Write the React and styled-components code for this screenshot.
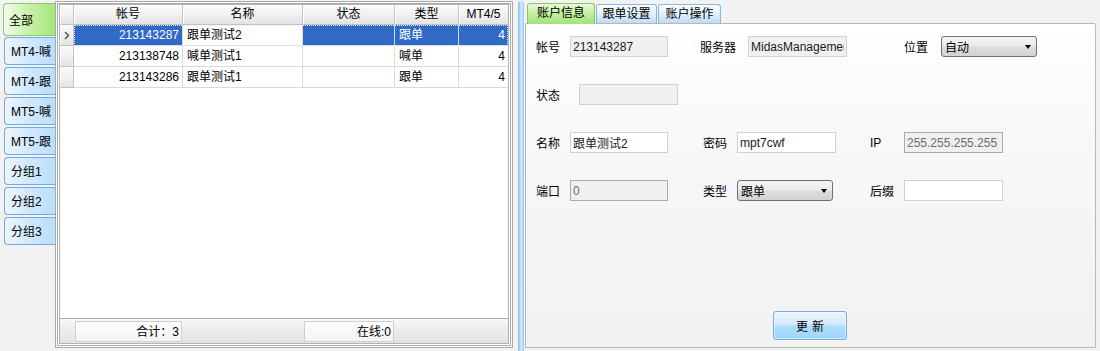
import React from 'react';
import styled, { createGlobalStyle, css } from 'styled-components';

const Global = createGlobalStyle`
  html, body { margin: 0; padding: 0; }
  body {
    background: #f2f2f2;
    font-family: "Liberation Sans", "Noto Sans CJK SC", sans-serif;
    font-size: 12px;
    color: #000;
  }
`;

const Root = styled.div`
  display: flex;
  width: 1100px;
  height: 351px;
  background: #f2f2f2;
  overflow: hidden;
`;

/* ---------- left vertical tabs ---------- */
const SideTabs = styled.div`
  width: 55px;
  flex: none;
  display: flex;
  flex-direction: column;
  align-items: flex-end;
  gap: 2px;
  padding-top: 3px;
  box-sizing: border-box;
`;

const SideTab = styled.div`
  box-sizing: border-box;
  width: ${p => (p.$active ? 52 : 51)}px;
  height: ${p => (p.$active ? 33 : 28)}px;
  margin-bottom: ${p => (p.$active ? -1 : 0)}px;
  border: 1px solid ${p => (p.$active ? '#8cc870' : '#72a9e2')};
  border-right: none;
  border-radius: 4px 0 0 4px;
  background: ${p =>
    p.$active
      ? 'linear-gradient(to right, #f1faea 0%, #cdf1ad 45%, #a3e67a 100%)'
      : 'linear-gradient(to right, #eef5fd 0%, #d2e9fc 45%, #b8defe 100%)'};
  padding-left: ${p => (p.$active ? 5 : 6)}px;
  padding-top: ${p => (p.$active ? 3 : 1)}px;
  display: flex;
  align-items: center;
  white-space: nowrap;
  overflow: hidden;
  line-height: 14px;
`;

/* ---------- grid panel ---------- */
const GridPanel = styled.div`
  width: 458px;
  flex: none;
  box-sizing: border-box;
  margin: 1px 0 3px;
  border: 3px double #a9a9a9;
  padding: 0 1px 1px 1px;
  display: flex;
  flex-direction: column;
  background: #fff;
`;

const Grid = styled.div`
  flex: 1;
  display: flex;
  flex-direction: column;
  border: 1px solid #b3b3b3;
  background: #fff;
  min-height: 0;
`;

const HeaderRow = styled.div`
  display: flex;
  height: 20px;
  flex: none;
`;

const headerSkin = css`
  background: linear-gradient(#fbfbfb 0%, #f1f1f1 50%, #e3e3e3 100%);
  border-right: 1px solid #c2c2c2;
  border-bottom: 1px solid #c2c2c2;
  box-shadow: inset 1px 1px 0 #ffffff;
`;

const HeadCell = styled.div`
  ${headerSkin};
  box-sizing: border-box;
  width: ${p => (p.$w ? `${p.$w}px` : 'auto')};
  flex: ${p => (p.$w ? 'none' : '1')};
  ${p => p.$last && 'border-right: none;'}
  height: 20px;
  line-height: 19px;
  text-align: center;
  white-space: nowrap;
  overflow: hidden;
`;

const Body = styled.div`
  flex: 1;
  display: flex;
  flex-direction: column;
`;

const Row = styled.div`
  display: flex;
  height: 21px;
  flex: none;
`;

const RowHead = styled.div`
  ${headerSkin};
  box-sizing: border-box;
  width: 14px;
  flex: none;
  display: flex;
  align-items: center;
  justify-content: center;
`;

const RowCells = styled.div`
  flex: 1;
  display: flex;
  ${p =>
    p.$focus &&
    css`
      outline: 1px dotted #dfe8f8;
      outline-offset: -1px;
    `}
`;

const Cell = styled.div`
  box-sizing: border-box;
  width: ${p => (p.$w ? `${p.$w}px` : 'auto')};
  flex: ${p => (p.$w ? 'none' : '1')};
  height: 21px;
  line-height: 20px;
  padding: 0 ${p => (p.$align === 'right' ? 3 : 3)}px 0 ${p => (p.$align === 'right' ? 3 : 4)}px;
  text-align: ${p => p.$align};
  border-right: ${p => (p.$last ? 'none' : '1px solid #dadada')};
  border-bottom: 1px solid #dadada;
  white-space: nowrap;
  overflow: hidden;
  background: ${p => (p.$sel ? '#3169c6' : '#fff')};
  color: ${p => (p.$sel ? '#fff' : '#000')};
`;

const StatusBar = styled.div`
  flex: none;
  height: 25px;
  box-sizing: border-box;
  border-top: 1px solid #a9a9a9;
  background: linear-gradient(#f8f8f8, #ececec 50%, #e3e3e3);
  display: flex;
  align-items: center;
  padding-left: 15px;
`;

const StatusCell = styled.div`
  box-sizing: border-box;
  width: ${p => p.$w}px;
  margin-left: ${p => p.$ml || 0}px;
  height: 21px;
  line-height: 20px;
  border: 1px solid #cfcfcf;
  background: linear-gradient(#fdfdfd, #f3f3f3);
  text-align: right;
  padding-right: 2px;
`;

/* ---------- splitter ---------- */
const Splitter = styled.div`
  width: 12px;
  flex: none;
  display: flex;
  padding-left: 5px;
  box-sizing: border-box;
`;

const SplitBar = styled.div`
  width: 6px;
  margin-top: 1px;
  border-radius: 3px 3px 0 0;
  background: linear-gradient(to right, #82bdf3 0%, #a9d3f8 30%, #dcedfd 55%, #8fc5f5 100%);
`;

/* ---------- right panel ---------- */
const RightPanel = styled.div`
  width: 571px;
  flex: none;
  margin: 3px 0 3px 0;
  display: flex;
  flex-direction: column;
`;

const TabStrip = styled.div`
  display: flex;
  align-items: flex-end;
  gap: 1px;
  height: 21px;
  padding-left: 2px;
  margin-bottom: -1px;
  position: relative;
  z-index: 1;
`;

const Tab = styled.div`
  box-sizing: border-box;
  width: ${p => p.$w}px;
  height: ${p => (p.$active ? 21 : 20)}px;
  border: 1px solid ${p => (p.$active ? '#86c965' : '#8ab8e6')};
  border-bottom: ${p => (p.$active ? 'none' : '1px solid #b8b8b8')};
  border-radius: 3px 3px 0 0;
  background: ${p =>
    p.$active
      ? 'linear-gradient(#e9f9dd 0%, #c4ef9f 45%, #a3e27d 100%)'
      : 'linear-gradient(#fbfdff 0%, #e6f2fd 45%, #bddcfa 100%)'};
  text-align: center;
  line-height: 18px;
  white-space: nowrap;
`;

const Content = styled.div`
  flex: 1;
  box-sizing: border-box;
  border: 1px solid #b9b9b9;
  border-radius: 0 2px 0 0;
  background: linear-gradient(#ffffff 0%, #f8f8f8 35%, #f1f1f1 100%);
  padding: 12px 0 7px 10px;
  display: flex;
  flex-direction: column;
  gap: 27px;
`;

const FormRow = styled.div`
  display: flex;
  height: 21px;
  align-items: center;
`;

const Field = styled.div`
  display: flex;
  align-items: center;
  width: ${p => (p.$w ? `${p.$w}px` : 'auto')};
  flex: none;
`;

const Label = styled.span`
  width: ${p => p.$w}px;
  flex: none;
  white-space: nowrap;
`;

const TextBox = styled.input`
  box-sizing: border-box;
  width: ${p => p.$w}px;
  height: 21px;
  margin: 0;
  padding: 0 2px;
  font: inherit;
  font-size: 12px;
  border: 1px solid ${p => (p.$off ? (p.$dark ? '#ababab' : '#d2d2d2') : '#ccd2da')};
  background: ${p => (p.$off ? '#f0f0f0' : '#ffffff')};
  color: ${p => (p.$grey ? '#6d6d6d' : '#1a1a1a')};
  outline: none;
`;

const Combo = styled.div`
  box-sizing: border-box;
  width: ${p => p.$w}px;
  height: 21px;
  border: 1px solid #707070;
  border-radius: 3px;
  background: linear-gradient(#f4f4f4 0%, #ebebeb 45%, #dddddd 55%, #d2d2d2 100%);
  display: flex;
  align-items: center;
  justify-content: space-between;
  padding: 0 5px 0 3px;
`;

const Caret = styled.span`
  width: 0;
  height: 0;
  border-left: 3.5px solid transparent;
  border-right: 3.5px solid transparent;
  border-top: 4px solid #000;
`;

const ButtonRow = styled.div`
  margin-top: auto;
  padding-left: 237px;
  display: flex;
`;

const Button = styled.button`
  box-sizing: border-box;
  width: 74px;
  height: 29px;
  margin: 0;
  padding: 0;
  font: inherit;
  font-size: 12px;
  letter-spacing: 4px;
  text-indent: 4px;
  color: #000;
  border: 1px solid #78abe0;
  border-radius: 3px;
  background: linear-gradient(#eaf5fe 0%, #d4eafd 45%, #ade0fd 52%, #9fd3fb 100%);
  box-shadow: inset 0 0 0 1px rgba(255, 255, 255, 0.5);
`;

const Chevron = () => (
  <svg width="6" height="9" viewBox="0 0 6 9">
    <polyline points="1,1 4.5,4.5 1,8" fill="none" stroke="#5a5a5a" strokeWidth="1.5" />
  </svg>
);

const groups = ['全部', 'MT4-喊', 'MT4-跟', 'MT5-喊', 'MT5-跟', '分组1', '分组2', '分组3'];

const columns = [
  { key: 'id', title: '帐号', w: 109, align: 'right' },
  { key: 'name', title: '名称', w: 120, align: 'left' },
  { key: 'status', title: '状态', w: 92, align: 'left' },
  { key: 'type', title: '类型', w: 64, align: 'left' },
  { key: 'mt', title: 'MT4/5', w: null, align: 'right' },
];

const rows = [
  { id: '213143287', name: '跟单测试2', status: '', type: '跟单', mt: '4', selected: true },
  { id: '213138748', name: '喊单测试1', status: '', type: '喊单', mt: '4' },
  { id: '213143286', name: '跟单测试1', status: '', type: '跟单', mt: '4' },
];

export default function App() {
  return (
    <>
      <Global />
      <Root>
        <SideTabs>
          {groups.map((g, i) => (
            <SideTab key={g} $active={i === 0}>
              {g}
            </SideTab>
          ))}
        </SideTabs>

        <GridPanel>
          <Grid>
            <HeaderRow>
              <HeadCell $w={14} />
              {columns.map((c, i) => (
                <HeadCell key={c.key} $w={c.w} $last={i === columns.length - 1}>
                  {c.title}
                </HeadCell>
              ))}
            </HeaderRow>
            <Body>
              {rows.map(r => (
                <Row key={r.id}>
                  <RowHead>{r.selected && <Chevron />}</RowHead>
                  <RowCells $focus={r.selected}>
                    {columns.map((c, i) => (
                      <Cell
                        key={c.key}
                        $w={c.w}
                        $align={c.align}
                        $last={i === columns.length - 1}
                        $sel={r.selected && c.key !== 'name'}
                      >
                        {r[c.key]}
                      </Cell>
                    ))}
                  </RowCells>
                </Row>
              ))}
            </Body>
            <StatusBar>
              <StatusCell $w={107}>合计：3</StatusCell>
              <StatusCell $w={90} $ml={122}>在线:0</StatusCell>
            </StatusBar>
          </Grid>
        </GridPanel>

        <Splitter>
          <SplitBar />
        </Splitter>

        <RightPanel>
          <TabStrip>
            <Tab $w={68} $active>账户信息</Tab>
            <Tab $w={61}>跟单设置</Tab>
            <Tab $w={63}>账户操作</Tab>
          </TabStrip>
          <Content>
            <FormRow>
              <Field $w={164}>
                <Label $w={34}>帐号</Label>
                <TextBox $w={98} $off readOnly value="213143287" />
              </Field>
              <Field $w={204}>
                <Label $w={48}>服务器</Label>
                <TextBox $w={99} $off readOnly value="MidasManagement" />
              </Field>
              <Field>
                <Label $w={37}>位置</Label>
                <Combo $w={96}>
                  <span>自动</span>
                  <Caret />
                </Combo>
              </Field>
            </FormRow>
            <FormRow>
              <Field>
                <Label $w={43}>状态</Label>
                <TextBox $w={99} $off readOnly value="" />
              </Field>
            </FormRow>
            <FormRow>
              <Field $w={167}>
                <Label $w={34}>名称</Label>
                <TextBox $w={98} readOnly value="跟单测试2" />
              </Field>
              <Field $w={167}>
                <Label $w={34}>密码</Label>
                <TextBox $w={99} readOnly value="mpt7cwf" />
              </Field>
              <Field>
                <Label $w={34}>IP</Label>
                <TextBox $w={99} $off $dark $grey readOnly value="255.255.255.255" />
              </Field>
            </FormRow>
            <FormRow>
              <Field $w={167}>
                <Label $w={34}>端口</Label>
                <TextBox $w={98} $off $dark $grey readOnly value="0" />
              </Field>
              <Field $w={167}>
                <Label $w={34}>类型</Label>
                <Combo $w={96}>
                  <span>跟单</span>
                  <Caret />
                </Combo>
              </Field>
              <Field>
                <Label $w={34}>后缀</Label>
                <TextBox $w={99} readOnly value="" />
              </Field>
            </FormRow>
            <ButtonRow>
              <Button>更新</Button>
            </ButtonRow>
          </Content>
        </RightPanel>
      </Root>
    </>
  );
}
